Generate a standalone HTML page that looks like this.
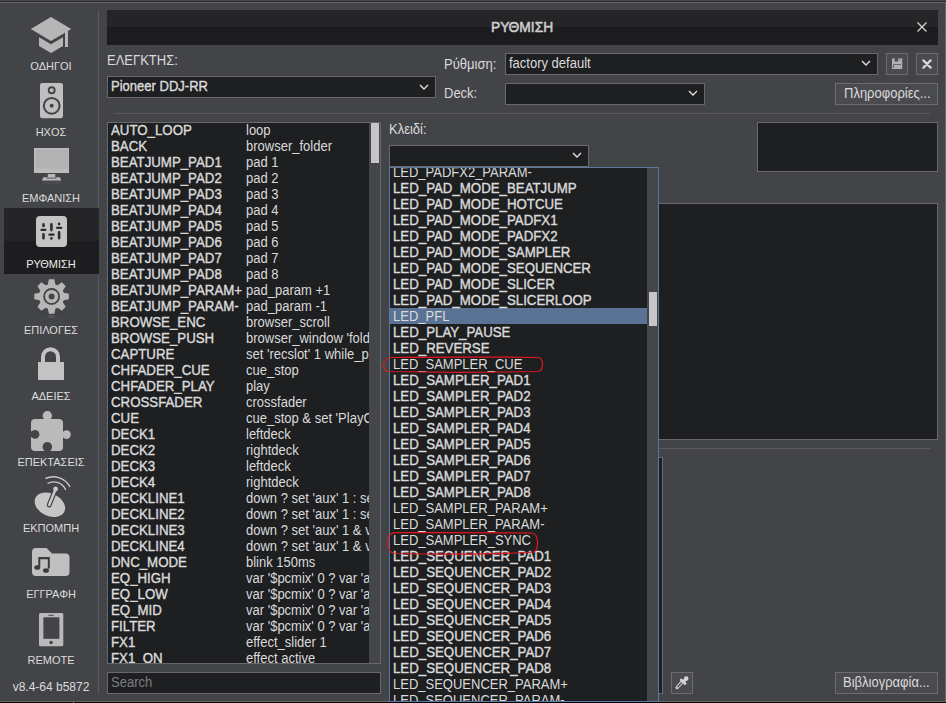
<!DOCTYPE html>
<html><head><meta charset="utf-8">
<style>
html,body{margin:0;padding:0;}
body{width:946px;height:703px;position:relative;overflow:hidden;background:#434448;font-family:"Liberation Sans",sans-serif;font-size:14px;color:#dadada;}
.a{position:absolute;}
.t{position:absolute;white-space:nowrap;line-height:16px;font-size:14px;transform:scaleX(0.92857);transform-origin:0 0;}
.t.b,.k,.p.b span{-webkit-text-stroke:0.4px currentColor;transform:scaleX(0.947);}
.lbl{position:absolute;white-space:nowrap;font-size:11px;line-height:13px;width:96px;left:3px;text-align:center;color:#dcdcdc;}
.box{position:absolute;box-sizing:border-box;border:1px solid #69686d;background:#1e1f21;}
.btn{position:absolute;box-sizing:border-box;border:1px solid #6c6b70;background:#4a4b4f;}
.chev{position:absolute;width:10px;height:7px;}
.r{height:16px;line-height:16px;white-space:nowrap;position:relative;}
.k{position:absolute;left:3px;width:141px;overflow:hidden;transform-origin:0 0;}
.v{position:absolute;left:138px;transform:scaleX(0.92857);transform-origin:0 0;}
.p{height:16px;line-height:16px;white-space:nowrap;padding-left:3px;}
.p span{display:inline-block;transform:scaleX(0.92857);transform-origin:0 0;}
.sel{background:#5a7394;}
</style></head><body>
<div class="a" style="left:0;top:0;width:946px;height:1px;background:#4a4a4c"></div>
<div class="a" style="left:0;top:1px;width:946px;height:1px;background:#2a2a2c"></div>
<div class="a" style="left:0;top:2px;width:946px;height:1px;background:#666569"></div>
<div class="a" style="left:945px;top:2px;width:1px;height:700px;background:#67666b"></div>
<div class="a" style="left:0;top:701px;width:946px;height:1px;background:#67666b"></div>
<div class="a" style="left:0;top:702px;width:946px;height:1px;background:#000"></div>
<div class="a" style="left:73px;top:702px;width:1px;height:1px;background:#7a7a7a"></div>
<div class="a" style="left:98px;top:10px;width:1px;height:684px;background:#5b5a5f"></div>
<div class="a" style="left:4px;top:208px;width:95px;height:33px;background:#252527"></div>
<div class="a" style="left:4px;top:241px;width:95px;height:33px;background:#1d1d1f"></div>
<svg class="a" style="left:0;top:0" width="98" height="700" viewBox="0 0 98 700">
<!-- grad cap -->
<g fill="#b5b6b5">
<path d="M51 17L71.2 29L51 41L30.8 29Z"/>
<path d="M39 37.3L51 44.3L63 37.3V46L51 53L39 46Z"/>
<rect x="65" y="30" width="3" height="17"/>
</g>
<!-- speaker -->
<rect x="40" y="83" width="23" height="35.3" rx="2.2" fill="#bfbfbf"/>
<circle cx="51.7" cy="90.3" r="3" fill="none" stroke="#434448" stroke-width="1.9"/>
<circle cx="51.7" cy="105.8" r="7.9" fill="none" stroke="#434448" stroke-width="2"/>
<circle cx="51.7" cy="105.8" r="2" fill="#434448"/>
<!-- monitor -->
<rect x="34" y="148" width="35" height="25" fill="#bbbbbb"/>
<rect x="36" y="149.6" width="32" height="19" fill="#b1b2b1"/>
<rect x="47.8" y="174" width="7.5" height="4" fill="#b6b6b6"/>
<path d="M43.5 177.2H59.7L61.3 180.6H41.9Z" fill="#bcbcbc"/>
<rect x="46.5" y="177.6" width="10" height="1" fill="#55565a"/>
<rect x="42" y="181.5" width="19" height="3" fill="#4a4b4f"/>
<!-- sliders -->
<rect x="36" y="216" width="31" height="31" rx="4" fill="#c4c4c4"/>
<g stroke="#2c2d2f" stroke-width="2.6" stroke-linecap="round" fill="none">
<path d="M43.5 224.4V226M43.5 234.3V238.3M51.4 224.3V230.1M51.4 238.3V238.5M59.1 223.9V224.1M59.1 232.2V238.3"/>
</g>
<g stroke="#2c2d2f" stroke-width="2.3" stroke-linecap="round" fill="none">
<path d="M41.55 229.9H45.35M49.45 234.7H53.55M57.15 227.8H61.25"/>
</g>
<!-- gear -->
<g transform="translate(51.6 296.5)" fill="#b6b6b6">
<circle r="12.6"/>
<path d="M-4.1 -10.5L-2.7 -17.3H2.7L4.1 -10.5Z" transform="rotate(0)"/><path d="M-4.1 -10.5L-2.7 -17.3H2.7L4.1 -10.5Z" transform="rotate(45)"/><path d="M-4.1 -10.5L-2.7 -17.3H2.7L4.1 -10.5Z" transform="rotate(90)"/><path d="M-4.1 -10.5L-2.7 -17.3H2.7L4.1 -10.5Z" transform="rotate(135)"/><path d="M-4.1 -10.5L-2.7 -17.3H2.7L4.1 -10.5Z" transform="rotate(180)"/><path d="M-4.1 -10.5L-2.7 -17.3H2.7L4.1 -10.5Z" transform="rotate(225)"/><path d="M-4.1 -10.5L-2.7 -17.3H2.7L4.1 -10.5Z" transform="rotate(270)"/><path d="M-4.1 -10.5L-2.7 -17.3H2.7L4.1 -10.5Z" transform="rotate(315)"/>
<circle r="7.5" fill="none" stroke="#434448" stroke-width="1.8"/>
<circle r="3" fill="#434448"/>
</g>
<rect x="40" y="317.5" width="23" height="1.5" fill="#48494d"/><rect x="48.5" y="315" width="6" height="3" fill="#535458"/>
<!-- lock -->
<rect x="38" y="362" width="26" height="18" fill="#c3c3c3"/>
<path d="M43 363V356.7A7.5 7.5 0 0 1 58 356.7V363" fill="none" stroke="#c3c3c3" stroke-width="4"/>
<!-- puzzle -->
<g fill="#bababa">
<rect x="31" y="419" width="32" height="32" rx="4"/>
<circle cx="47.3" cy="415.8" r="4.7"/><rect x="44.6" y="416" width="5.4" height="4"/>
<circle cx="66.5" cy="434.6" r="4.3"/><rect x="62" y="432" width="4" height="5.2"/>
</g>
<g fill="#434448">
<circle cx="35" cy="434.3" r="4.4"/><rect x="30" y="431.6" width="5" height="5.4"/>
<circle cx="47.3" cy="446.8" r="4.8"/><rect x="44.5" y="447" width="5.6" height="5"/>
</g>
<!-- dish -->
<ellipse cx="49.9" cy="504.8" rx="16" ry="11.2" transform="rotate(25 49.9 504.8)" fill="#c6c6c6"/>
<path d="M49.2 505L55.6 489" stroke="#434448" stroke-width="4.8" stroke-linecap="round"/>
<path d="M49.2 505L55.6 489" stroke="#cacaca" stroke-width="2.4" stroke-linecap="round"/>
<circle cx="55.6" cy="489" r="2.4" fill="#c8c8c8"/>
<path d="M47.5 483.5A13 13 0 0 1 65.7 490" fill="none" stroke="#c8c8c8" stroke-width="1.4"/>
<path d="M45.5 478.5A19 19 0 0 1 70 487" fill="none" stroke="#c8c8c8" stroke-width="1.4"/>
<!-- folder -->
<path fill="#c0c0c0" d="M36 548H46.5L52 553.5H65.5A4 4 0 0 1 69.5 557.5V572A4 4 0 0 1 65.5 576H36A4 4 0 0 1 32 572V552A4 4 0 0 1 36 548Z"/>
<g fill="#3a3b3e">
<path d="M38.3 557H49.8V568.5H47.8V559.3H40.3V566H38.3Z"/>
<ellipse cx="37.3" cy="567.5" rx="3" ry="2.3"/>
<ellipse cx="46" cy="570.5" rx="3" ry="2.3"/>
</g>
<!-- phone -->
<rect x="39" y="613" width="24.3" height="33.3" rx="1.5" fill="#b9b9b9"/>
<rect x="43.4" y="617.3" width="16" height="21.5" fill="#434448"/>
<circle cx="51.1" cy="642.5" r="1.7" fill="#434448"/>
<rect x="48.5" y="614.8" width="5" height="1" fill="#434448"/>
</svg>
<div class="lbl" style="top:60px">ΟΔΗΓΟΙ</div>
<div class="lbl" style="top:126px">ΗΧΟΣ</div>
<div class="lbl" style="top:192px">ΕΜΦΑΝΙΣΗ</div>
<div class="lbl" style="top:258px;color:#ececec">ΡΥΘΜΙΣΗ</div>
<div class="lbl" style="top:324px">ΕΠΙΛΟΓΕΣ</div>
<div class="lbl" style="top:390px">ΑΔΕΙΕΣ</div>
<div class="lbl" style="top:456px">ΕΠΕΚΤΑΣΕΙΣ</div>
<div class="lbl" style="top:522px">ΕΚΠΟΜΠΗ</div>
<div class="lbl" style="top:588px">ΕΓΓΡΑΦΗ</div>
<div class="lbl" style="top:654px">REMOTE</div>
<div class="lbl" style="top:680px;font-size:12px;line-height:14px">v8.4-64 b5872</div>
<div class="a" style="left:107px;top:10px;width:831px;height:17px;background:#252527"></div>
<div class="a" style="left:107px;top:27px;width:831px;height:18px;background:#1c1c1e"></div>
<div class="a" style="left:491px;top:19px;line-height:16px;font-size:14px;-webkit-text-stroke:0.55px #cccccc;color:#cccccc;transform:scaleX(0.985);transform-origin:0 0">ΡΥΘΜΙΣΗ</div>
<svg class="a" style="left:917px;top:22px" width="10" height="10" viewBox="0 0 10 10"><path d="M0.5 0.5L9.5 9.5M9.5 0.5L0.5 9.5" stroke="#d0d0d0" stroke-width="1.4"/></svg>
<div class="t " style="left:107px;top:52px;">ΕΛΕΓΚΤΗΣ:</div>
<div class="box" style="left:107px;top:76px;width:329px;height:22px"></div>
<div class="t b" style="left:111px;top:78px;transform:scaleX(0.93)">Pioneer DDJ-RR</div>
<svg class="chev" style="left:419px;top:84px" viewBox="0 0 10 7"><path d="M1 1L5 5L9 1" fill="none" stroke="#dedede" stroke-width="1.4"/></svg>
<div class="t " style="left:444px;top:56px;">Ρύθμιση:</div>
<div class="box" style="left:505px;top:53px;width:373px;height:22px"></div>
<div class="t " style="left:509px;top:55px;">factory default</div>
<svg class="chev" style="left:861px;top:60px" viewBox="0 0 10 7"><path d="M1 1L5 5L9 1" fill="none" stroke="#dedede" stroke-width="1.4"/></svg>
<div class="btn" style="left:886px;top:53px;width:22px;height:22px"></div>
<svg class="a" style="left:892px;top:58px" width="11" height="12" viewBox="0 0 11 12"><path d="M0 0.3H10.2V11H0Z" fill="#b0b0b0"/><path d="M2.5 0H6.2V3.6H2.5Z M1.2 6.2H9V7H2V10H1.2Z" fill="#505155"/><path d="M7.3 0H8.1V2.8H7.3Z" fill="#505155" fill-opacity="0.6"/><path d="M0 0H0.8V0.8Z M10.2 0H9.4L10.2 0.8Z" fill="#4a4b4f"/></svg>
<div class="btn" style="left:916px;top:53px;width:22px;height:22px"></div>
<svg class="a" style="left:922px;top:59px" width="10" height="10" viewBox="0 0 10 10"><path d="M1.4 1.4L8.6 8.6M8.6 1.4L1.4 8.6" stroke="#d8d8d8" stroke-width="2.2" stroke-linecap="round"/></svg>
<div class="t " style="left:444px;top:85px;">Deck:</div>
<div class="box" style="left:505px;top:83px;width:200px;height:22px"></div>
<svg class="chev" style="left:688px;top:90px" viewBox="0 0 10 7"><path d="M1 1L5 5L9 1" fill="none" stroke="#dedede" stroke-width="1.4"/></svg>
<div class="btn" style="left:835px;top:83px;width:103px;height:22px"></div>
<div class="t " style="left:844px;top:85px;">Πληροφορίες...</div>
<div class="a" style="left:115px;top:113px;width:815px;height:1px;background:#5b5a5f"></div>
<div class="box" style="left:107px;top:122px;width:274px;height:542px"></div>
<div class="a" style="left:369px;top:123px;width:11px;height:540px;background:#45464a"></div>
<div class="a" style="left:371px;top:123px;width:8px;height:40px;background:#c6c6ca"></div>
<div class="a" style="left:108px;top:123px;width:261px;height:540px;overflow:hidden"><div class="a" style="left:0;top:-1px;width:261px"><div class="r"><span class="k">AUTO_LOOP</span><span class="v">loop</span></div><div class="r"><span class="k">BACK</span><span class="v">browser_folder</span></div><div class="r"><span class="k">BEATJUMP_PAD1</span><span class="v">pad 1</span></div><div class="r"><span class="k">BEATJUMP_PAD2</span><span class="v">pad 2</span></div><div class="r"><span class="k">BEATJUMP_PAD3</span><span class="v">pad 3</span></div><div class="r"><span class="k">BEATJUMP_PAD4</span><span class="v">pad 4</span></div><div class="r"><span class="k">BEATJUMP_PAD5</span><span class="v">pad 5</span></div><div class="r"><span class="k">BEATJUMP_PAD6</span><span class="v">pad 6</span></div><div class="r"><span class="k">BEATJUMP_PAD7</span><span class="v">pad 7</span></div><div class="r"><span class="k">BEATJUMP_PAD8</span><span class="v">pad 8</span></div><div class="r"><span class="k">BEATJUMP_PARAM+</span><span class="v">pad_param +1</span></div><div class="r"><span class="k">BEATJUMP_PARAM-</span><span class="v">pad_param -1</span></div><div class="r"><span class="k">BROWSE_ENC</span><span class="v">browser_scroll</span></div><div class="r"><span class="k">BROWSE_PUSH</span><span class="v">browser_window &#x27;folders&#x27;</span></div><div class="r"><span class="k">CAPTURE</span><span class="v">set &#x27;recslot&#x27; 1 while_pressed</span></div><div class="r"><span class="k">CHFADER_CUE</span><span class="v">cue_stop</span></div><div class="r"><span class="k">CHFADER_PLAY</span><span class="v">play</span></div><div class="r"><span class="k">CROSSFADER</span><span class="v">crossfader</span></div><div class="r"><span class="k">CUE</span><span class="v">cue_stop &amp; set &#x27;PlayCue&#x27;</span></div><div class="r"><span class="k">DECK1</span><span class="v">leftdeck</span></div><div class="r"><span class="k">DECK2</span><span class="v">rightdeck</span></div><div class="r"><span class="k">DECK3</span><span class="v">leftdeck</span></div><div class="r"><span class="k">DECK4</span><span class="v">rightdeck</span></div><div class="r"><span class="k">DECKLINE1</span><span class="v">down ? set &#x27;aux&#x27; 1 : set</span></div><div class="r"><span class="k">DECKLINE2</span><span class="v">down ? set &#x27;aux&#x27; 1 : set</span></div><div class="r"><span class="k">DECKLINE3</span><span class="v">down ? set &#x27;aux&#x27; 1 &amp; var</span></div><div class="r"><span class="k">DECKLINE4</span><span class="v">down ? set &#x27;aux&#x27; 1 &amp; var</span></div><div class="r"><span class="k">DNC_MODE</span><span class="v">blink 150ms</span></div><div class="r"><span class="k">EQ_HIGH</span><span class="v">var &#x27;$pcmix&#x27; 0 ? var &#x27;a</span></div><div class="r"><span class="k">EQ_LOW</span><span class="v">var &#x27;$pcmix&#x27; 0 ? var &#x27;a</span></div><div class="r"><span class="k">EQ_MID</span><span class="v">var &#x27;$pcmix&#x27; 0 ? var &#x27;a</span></div><div class="r"><span class="k">FILTER</span><span class="v">var &#x27;$pcmix&#x27; 0 ? var &#x27;a</span></div><div class="r"><span class="k">FX1</span><span class="v">effect_slider 1</span></div><div class="r"><span class="k">FX1_ON</span><span class="v">effect active</span></div></div></div>
<div class="box" style="left:107px;top:672px;width:274px;height:22px"></div>
<div class="t " style="left:111px;top:674px;color:#7c7d80">Search</div>
<div class="t " style="left:389px;top:121px;">Κλειδί:</div>
<div class="box" style="left:757px;top:122px;width:181px;height:50px"></div>
<div class="box" style="left:600px;top:203px;width:338px;height:237px"></div>
<div class="a" style="left:389px;top:448px;width:541px;height:1px;background:#5b5a5f"></div>
<div class="box" style="left:600px;top:457px;width:63px;height:237px"></div>
<div class="btn" style="left:671px;top:672px;width:22px;height:22px"></div>
<svg class="a" style="left:671px;top:672px" width="22" height="22" viewBox="0 0 22 22"><path d="M6.2 15.5L11.3 9.7" stroke="#d4d4d4" stroke-width="3.4" stroke-linecap="round"/><path d="M6.9 14.8L10.6 10.6" stroke="#4a4b4f" stroke-width="1.3" stroke-linecap="round"/><path d="M10.2 7.9L14.2 11.7" stroke="#d4d4d4" stroke-width="2.6" stroke-linecap="round"/><path d="M12.4 9.6L15.1 6.8" stroke="#d4d4d4" stroke-width="3" stroke-linecap="round"/><circle cx="15.2" cy="6.6" r="2.3" fill="#d4d4d4"/></svg>
<div class="btn" style="left:835px;top:672px;width:103px;height:22px"></div>
<div class="t " style="left:843px;top:674px;">Βιβλιογραφία...</div>
<div class="box" style="left:389px;top:145px;width:200px;height:22px"></div>
<svg class="chev" style="left:572px;top:152px" viewBox="0 0 10 7"><path d="M1 1L5 5L9 1" fill="none" stroke="#dedede" stroke-width="1.4"/></svg>
<div class="a" style="left:389px;top:167px;width:270px;height:535px;box-sizing:border-box;border:1px solid #5a79a0;background:#1e1f21"></div>
<div class="a" style="left:647px;top:168px;width:11px;height:533px;background:#45464a"></div>
<div class="a" style="left:649px;top:292px;width:8px;height:34px;background:#c6c6ca"></div>
<div class="a" style="left:390px;top:168px;width:257px;height:533px;overflow:hidden"><div class="a" style="left:0;top:-4px;width:257px"><div class="p"><span>LED_PADFX2_PARAM-</span></div><div class="p b"><span>LED_PAD_MODE_BEATJUMP</span></div><div class="p b"><span>LED_PAD_MODE_HOTCUE</span></div><div class="p b"><span>LED_PAD_MODE_PADFX1</span></div><div class="p b"><span>LED_PAD_MODE_PADFX2</span></div><div class="p b"><span>LED_PAD_MODE_SAMPLER</span></div><div class="p b"><span>LED_PAD_MODE_SEQUENCER</span></div><div class="p b"><span>LED_PAD_MODE_SLICER</span></div><div class="p b"><span>LED_PAD_MODE_SLICERLOOP</span></div><div class="p sel"><span>LED_PFL</span></div><div class="p b"><span>LED_PLAY_PAUSE</span></div><div class="p b"><span>LED_REVERSE</span></div><div class="p"><span>LED_SAMPLER_CUE</span></div><div class="p b"><span>LED_SAMPLER_PAD1</span></div><div class="p b"><span>LED_SAMPLER_PAD2</span></div><div class="p b"><span>LED_SAMPLER_PAD3</span></div><div class="p b"><span>LED_SAMPLER_PAD4</span></div><div class="p b"><span>LED_SAMPLER_PAD5</span></div><div class="p b"><span>LED_SAMPLER_PAD6</span></div><div class="p b"><span>LED_SAMPLER_PAD7</span></div><div class="p b"><span>LED_SAMPLER_PAD8</span></div><div class="p"><span>LED_SAMPLER_PARAM+</span></div><div class="p"><span>LED_SAMPLER_PARAM-</span></div><div class="p"><span>LED_SAMPLER_SYNC</span></div><div class="p b"><span>LED_SEQUENCER_PAD1</span></div><div class="p b"><span>LED_SEQUENCER_PAD2</span></div><div class="p b"><span>LED_SEQUENCER_PAD3</span></div><div class="p b"><span>LED_SEQUENCER_PAD4</span></div><div class="p b"><span>LED_SEQUENCER_PAD5</span></div><div class="p b"><span>LED_SEQUENCER_PAD6</span></div><div class="p b"><span>LED_SEQUENCER_PAD7</span></div><div class="p b"><span>LED_SEQUENCER_PAD8</span></div><div class="p"><span>LED_SEQUENCER_PARAM+</span></div><div class="p"><span>LED_SEQUENCER_PARAM-</span></div></div></div>
<svg class="a" style="left:380px;top:354px" width="170" height="22" viewBox="0 0 170 22"><path d="M10 3.5C60 3 120 3 158 3.5C164 4 164 17 158 17.5C110 18.5 50 18.5 8 17.5C2 16 2 5 10 3.5Z" fill="none" stroke="#e4161e" stroke-width="1.2"/></svg>
<svg class="a" style="left:382px;top:529px" width="162" height="30" viewBox="0 0 162 30"><path d="M12 3.6C60 3.5 120 3.5 150 4C157 5 157 20 152 23C120 25 60 25.5 12 24.5C4 22 3 6 12 3.6Z" fill="none" stroke="#e4161e" stroke-width="1.2"/></svg>
</body></html>
